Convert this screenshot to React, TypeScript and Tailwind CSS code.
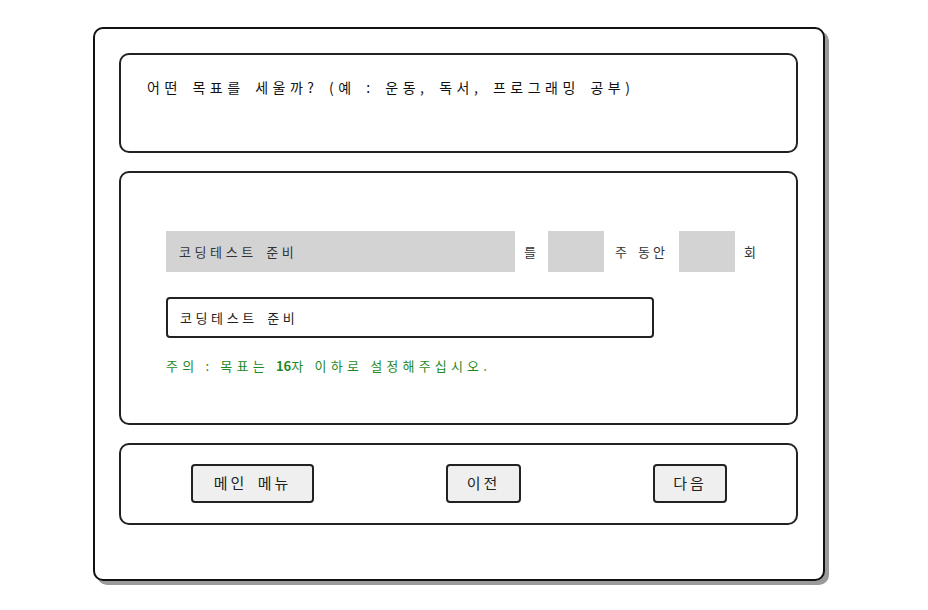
import React from "react";

const font = { fontFamily: '"Noto Sans CJK KR", "Noto Sans", sans-serif' };

function Panel({ className, children }: { className?: string; children?: React.ReactNode }) {
    return (
        <div className={`w-[679px] rounded-[10px] border-2 border-[#222] bg-white ${className ?? ""}`}>
            {children}
        </div>
    );
}

function Button({ label, className }: { label: string; className?: string }) {
    return (
        <button
            className={`flex h-[39px] shrink-0 items-center justify-center rounded-[4px] border-2 border-[#222] bg-[#efefef] text-[15px] tracking-[3px] text-[#222] [word-spacing:4px] ${className ?? ""}`}
        >
            {label}
        </button>
    );
}

export default function App() {
    return (
        <div className="h-[610px] w-[928px] bg-white" style={font}>
            <div className="ml-[93px] pt-[27px]">
                <div className="flex h-[554px] w-[732px] flex-col gap-[18px] rounded-[10px] border-2 border-[#111] bg-white px-[24px] pt-[24px] shadow-[4px_4px_0_#9a9a9a]">
                    <Panel className="h-[100px] px-[26px] pt-[22px]">
                        <p className="text-[14px] tracking-[4.5px] text-[#111] [word-spacing:3px]">
                            어떤 목표를 세울까? (예 : 운동, 독서, 프로그래밍 공부)
                        </p>
                    </Panel>

                    <Panel className="h-[254px] px-[45px] pt-[58px]">
                        <div className="flex h-[41px] items-center text-[13px] tracking-[3px] text-[#333]">
                            <div className="flex h-full w-[349px] shrink-0 items-center bg-[#d3d3d3] pl-[13px] tracking-[3.6px] [word-spacing:3px]">
                                코딩테스트 준비
                            </div>
                            <span className="w-[33px] shrink-0 text-center">를</span>
                            <div className="h-full w-[56px] shrink-0 bg-[#d3d3d3]" />
                            <span className="w-[75px] shrink-0 text-center [word-spacing:2px]">주 동안</span>
                            <div className="h-full w-[56px] shrink-0 bg-[#d3d3d3]" />
                            <span className="w-[33px] shrink-0 text-center">회</span>
                        </div>
                        <div className="mt-[25px] flex h-[41px] w-[488px] items-center rounded-[4px] border-2 border-[#222] pl-[12px] text-[13px] tracking-[3.6px] text-[#222] [word-spacing:3px]">
                            코딩테스트 준비
                        </div>
                        <p className="mt-[18px] text-[13px] tracking-[4.2px] text-[#1f8a1f]">
                            주의 : 목표는 <b className="tracking-normal">16</b>자 이하로 설정해주십시오.
                        </p>
                    </Panel>

                    <Panel className="h-[82px]">
                        <div className="flex pt-[19px]">
                            <Button label="메인 메뉴" className="ml-[70px] w-[123px]" />
                            <Button label="이전" className="ml-[132px] w-[75px]" />
                            <Button label="다음" className="ml-[132px] w-[74px]" />
                        </div>
                    </Panel>
                </div>
            </div>
        </div>
    );
}
